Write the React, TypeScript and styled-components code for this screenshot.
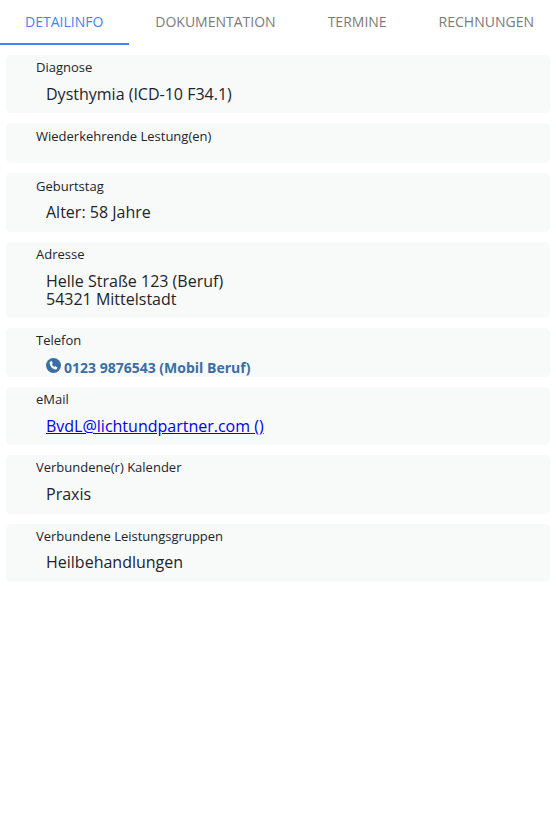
import React from 'react';
import styled, {createGlobalStyle} from "styled-components";

const GlobalStyle = createGlobalStyle`
  html, body {
    margin: 0;
    padding: 0;
    background: #ffffff;
    overflow: hidden;
  }
  body {
    font-family: "Open Sans", "Liberation Sans", sans-serif;
  }
`

const tabs = ['Detailinfo', 'Dokumentation', 'Termine', 'Rechnungen']

const PhoneIcon = () => (
    <PhoneSvg viewBox="0 0 16 16">
        <circle cx="8" cy="8" r="8" fill="#3a6ea5"/>
        <path fill="#f8f9f9"
              d="M4.6 3.7l1.5-.5 1.2 2.4-1 .9c.4 1.3 1.3 2.4 2.6 3l1-.9 2.2 1.5-.6 1.5c-.3.5-.9.7-1.5.6C6.6 11.500 4.200 8.800 3.800 5.300c0-.7.300-1.300.8-1.600z"/>
    </PhoneSvg>
)

export default function App() {
    return (
        <Page>
            <GlobalStyle/>
            <TabBar>
                {tabs.map((el, i) => <Tab key={el} active={i === 0}>{el}</Tab>)}
            </TabBar>
            <List>
                <Card>
                    <Label>Diagnose</Label>
                    <Value>Dysthymia (ICD-10 F34.1)</Value>
                </Card>
                <EmptyCard>
                    <Label>Wiederkehrende Lestung(en)</Label>
                </EmptyCard>
                <Card>
                    <Label>Geburtstag</Label>
                    <Value>Alter: 58 Jahre</Value>
                </Card>
                <Card>
                    <Label>Adresse</Label>
                    <Value>Helle Straße 123 (Beruf)<br/>54321 Mittelstadt</Value>
                </Card>
                <PhoneCard>
                    <Label>Telefon</Label>
                    <PhoneRow><PhoneIcon/>0123 9876543 (Mobil Beruf)</PhoneRow>
                </PhoneCard>
                <Card>
                    <Label>eMail</Label>
                    <Value><MailLink href="#">BvdL@lichtundpartner.com ()</MailLink></Value>
                </Card>
                <Card>
                    <Label>Verbundene(r) Kalender</Label>
                    <Value>Praxis</Value>
                </Card>
                <Card>
                    <Label>Verbundene Leistungsgruppen</Label>
                    <Value>Heilbehandlungen</Value>
                </Card>
            </List>
        </Page>
    );
}

const Page = styled.div`
  width: 556px;
  height: 840px;
  overflow: hidden;
  background: #ffffff;
`
const TabBar = styled.div`
  display: flex;
  height: 45px;
  width: 570px;
`
const Tab = styled.div<{ active: boolean }>`
  box-sizing: border-box;
  height: 45px;
  padding: 13px 26px 0;
  font-size: 14px;
  line-height: 18px;
  text-transform: uppercase;
  white-space: nowrap;
  color: ${props => props.active ? '#4285f4' : '#7b7b7b'};
  border-bottom: 2px solid ${props => props.active ? '#4285f4' : 'transparent'};
  &:first-child {
    padding-left: 25px;
    padding-right: 26px;
  }
`
const List = styled.div`
  display: flex;
  flex-direction: column;
  gap: 10px;
  margin: 10px 6px 0;
`
const Card = styled.div`
  background: #f8f9f9;
  border-radius: 5px;
  padding: 3.2px 30px 10.55px;
  color: #212529;
`
const EmptyCard = styled(Card)`
  height: 40px;
  box-sizing: border-box;
`
const PhoneCard = styled(Card)`
  height: 48.5px;
  box-sizing: border-box;
  overflow: hidden;
`
const Label = styled.div`
  font-size: 13px;
  line-height: 18px;
  color: #212529;
`
const Value = styled.div`
  font-size: 16px;
  line-height: 18px;
  margin: 8.7px 0 0 10px;
  color: #212529;
`
const PhoneRow = styled.div`
  display: flex;
  align-items: center;
  gap: 3px;
  margin: 8.4px 0 0 10px;
  font-size: 14px;
  line-height: 19px;
  font-weight: 700;
  color: #3a6ea5;
`
const PhoneSvg = styled.svg`
  width: 15px;
  height: 15px;
  flex-shrink: 0;
  margin-top: -3px;
`
const MailLink = styled.a`
  color: #0000ee;
  text-decoration: underline;
`
